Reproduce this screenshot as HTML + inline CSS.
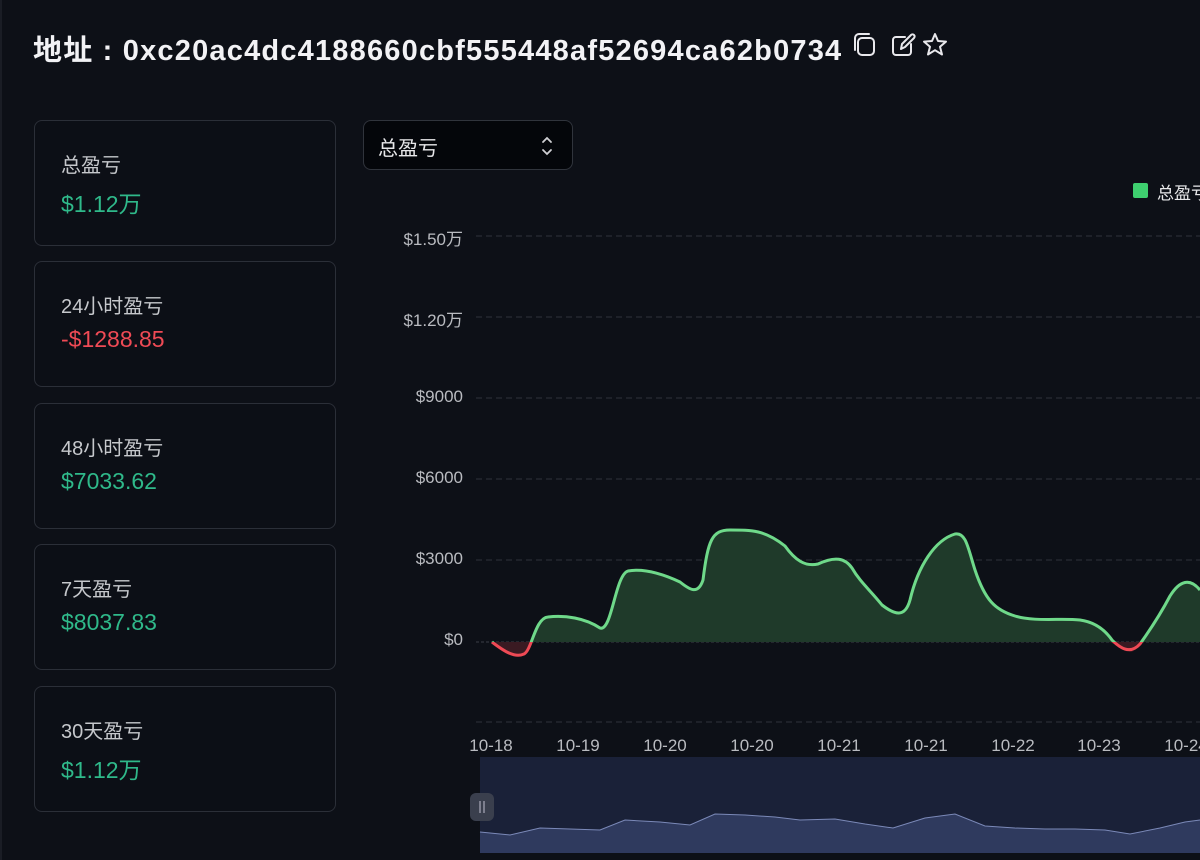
<!DOCTYPE html>
<html><head><meta charset="utf-8"><style>
*{margin:0;padding:0;box-sizing:border-box}
body{width:1200px;height:860px;background:#0d1017;font-family:"Liberation Sans","Noto Sans CJK SC",sans-serif;position:relative;overflow:hidden;color:#fff}
.h{position:absolute;left:33px;top:27px;font-size:29px;font-weight:bold;color:#f2f2f5;letter-spacing:1.2px;white-space:nowrap}
.card{position:absolute;left:34px;width:302px;height:126px;border:1px solid #2b2f38;border-radius:8px;background:#0c0f16}
.card .l{position:absolute;left:26px;top:28px;font-size:20px;color:#c6c8cc}
.card .v{position:absolute;left:26px;top:64px;font-size:23px;color:#2fb98a}
.card .v.r{color:#ef4a55}
.sel{position:absolute;left:363px;top:120px;width:210px;height:50px;border:1px solid #30343c;border-radius:8px;background:#04060a}
.sel span{position:absolute;left:14px;top:11px;font-size:20px;color:#e8e8ea}
.yl{position:absolute;right:737px;font-size:17px;color:#b9bbc0;text-align:right;white-space:nowrap}
.xl{position:absolute;top:736px;font-size:17px;color:#b9bbc0;white-space:nowrap;transform:translateX(-50%)}
</style></head><body>
<div style="position:absolute;left:0;top:0;width:2px;height:860px;background:#1a1d25"></div>
<div class="h">地址 : 0xc20ac4dc4188660cbf555448af52694ca62b0734</div>
<svg style="position:absolute;left:850px;top:30px" width="100" height="30" viewBox="0 0 100 30" fill="none" stroke="#e8e8ec" stroke-width="2" stroke-linejoin="round" stroke-linecap="round">
<rect x="8" y="8" width="16" height="17" rx="4"/><path d="M5 20V8a4 4 0 0 1 4-4h10"/>
<path d="M55 7h-9a3 3 0 0 0-3 3v12a3 3 0 0 0 3 3h12a3 3 0 0 0 3-3v-8"/><path d="M51 19l1-5 9-9a2 2 0 0 1 3 3l-9 9z"/>
<path d="M85 4l3 7 8 .6-6 5.2 2 7.7-7-4.3-7 4.3 2-7.7-6-5.2 8-.6z"/>
</svg>
<div class="card" style="top:120px"><div class="l">总盈亏</div><div class="v">$1.12万</div></div>
<div class="card" style="top:261px"><div class="l">24小时盈亏</div><div class="v r">-$1288.85</div></div>
<div class="card" style="top:403px"><div class="l">48小时盈亏</div><div class="v">$7033.62</div></div>
<div class="card" style="top:544px"><div class="l">7天盈亏</div><div class="v">$8037.83</div></div>
<div class="card" style="top:686px"><div class="l">30天盈亏</div><div class="v">$1.12万</div></div>
<div class="sel"><span>总盈亏</span>
<svg style="position:absolute;left:176px;top:13px" width="14" height="24" viewBox="0 0 14 24" fill="none" stroke="#d0d0d4" stroke-width="1.8" stroke-linecap="round"><path d="M3 8l4-4 4 4M3 16l4 4 4-4"/></svg></div>
<div style="position:absolute;left:1133px;top:183px;width:15px;height:15px;background:#3ecf6f;border-radius:2px"></div>
<div style="position:absolute;left:1157px;top:179px;font-size:17px;color:#e8e8ea;white-space:nowrap">总盈亏</div>
<div class="yl" style="top:225px">$1.50万</div>
<div class="yl" style="top:306px">$1.20万</div>
<div class="yl" style="top:387px">$9000</div>
<div class="yl" style="top:468px">$6000</div>
<div class="yl" style="top:549px">$3000</div>
<div class="yl" style="top:630px">$0</div>
<div class="xl" style="left:491px">10-18</div><div class="xl" style="left:578px">10-19</div><div class="xl" style="left:665px">10-20</div><div class="xl" style="left:752px">10-20</div><div class="xl" style="left:839px">10-21</div><div class="xl" style="left:926px">10-21</div><div class="xl" style="left:1013px">10-22</div><div class="xl" style="left:1099px">10-23</div><div class="xl" style="left:1186px">10-24</div>
<svg style="position:absolute;left:0;top:0" width="1200" height="860">
<defs>
<clipPath id="up"><rect x="0" y="0" width="1200" height="642"/></clipPath>
<clipPath id="dn"><rect x="0" y="642" width="1200" height="200"/></clipPath>
</defs>
<g stroke="#2e323b" stroke-width="1" stroke-dasharray="6 4">
<line x1="476" y1="236" x2="1200" y2="236"/><line x1="476" y1="317" x2="1200" y2="317"/><line x1="476" y1="398" x2="1200" y2="398"/><line x1="476" y1="479" x2="1200" y2="479"/><line x1="476" y1="560" x2="1200" y2="560"/><line x1="476" y1="722" x2="1200" y2="722"/>
</g>
<line x1="476" y1="642" x2="1200" y2="642" stroke="#3a3e47" stroke-dasharray="3 2"/>
<path id="c" d="M492 642 C505 652,515 658,524 654 C532 650,535 618,548 617 C565 615,585 618,600 628 C612 632,615 575,628 571 C645 568,665 575,680 582 C690 590,698 595,703 580 C708 540,712 530,730 530 C752 530,765 530,785 546 C795 560,805 567,818 564 C835 556,845 558,852 568 C860 582,870 590,882 605 C895 615,905 618,910 600 C918 566,935 540,955 534 C966 532,968 548,975 570 C985 600,995 610,1015 616 C1035 622,1060 618,1080 620 C1095 622,1105 630,1112 640 C1120 648,1130 655,1140 644 C1150 630,1160 615,1170 596 C1180 580,1190 578,1200 590" fill="none"/>
<g clip-path="url(#up)"><path d="M492 642 C505 652,515 658,524 654 C532 650,535 618,548 617 C565 615,585 618,600 628 C612 632,615 575,628 571 C645 568,665 575,680 582 C690 590,698 595,703 580 C708 540,712 530,730 530 C752 530,765 530,785 546 C795 560,805 567,818 564 C835 556,845 558,852 568 C860 582,870 590,882 605 C895 615,905 618,910 600 C918 566,935 540,955 534 C966 532,968 548,975 570 C985 600,995 610,1015 616 C1035 622,1060 618,1080 620 C1095 622,1105 630,1112 640 C1120 648,1130 655,1140 644 C1150 630,1160 615,1170 596 C1180 580,1190 578,1200 590 L1200 642 L492 642Z" fill="#1f3a2a"/><use href="#c" stroke="#6fd98a" stroke-width="3"/></g>
<g clip-path="url(#dn)"><path d="M492 642 C505 652,515 658,524 654 C532 650,535 618,548 617 L548 642Z M1105 642 C1110 640,1120 648,1130 652 C1135 652,1138 646,1142 642Z" fill="#3a1a22"/><use href="#c" stroke="#ef4a55" stroke-width="3"/></g>
<rect x="480" y="757" width="720" height="96" fill="#1a2138"/>
<polygon points="480,832 510,835 540,828 570,829 600,830 625,820 660,822 690,825 715,814 745,815 775,817 800,820 835,819 865,824 893,828 925,818 955,814 985,826 1015,828 1045,829 1075,829 1105,830 1130,834 1160,828 1185,822 1200,820 1200,853 480,853" fill="#2f3a5e"/>
<polyline points="480,832 510,835 540,828 570,829 600,830 625,820 660,822 690,825 715,814 745,815 775,817 800,820 835,819 865,824 893,828 925,818 955,814 985,826 1015,828 1045,829 1075,829 1105,830 1130,834 1160,828 1185,822 1200,820" fill="none" stroke="#7b89b8" stroke-width="1"/>
<rect x="470" y="793" width="24" height="28" rx="6" fill="#3a3f4d"/>
<line x1="480" y1="801" x2="480" y2="813" stroke="#aab" stroke-width="1.2"/><line x1="484" y1="801" x2="484" y2="813" stroke="#aab" stroke-width="1.2"/>
</svg>
</body></html>
